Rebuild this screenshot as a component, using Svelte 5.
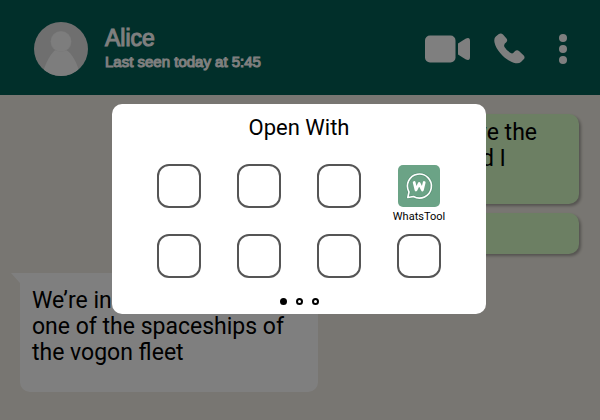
<script>
  const apps = [
    { id: 1 }, { id: 2 }, { id: 3 }, { id: 4, name: 'WhatsTool' },
    { id: 5 }, { id: 6 }, { id: 7 }, { id: 8 }
  ];
  const pages = [1, 2, 3];
  let page = $state(1);
</script>

<div class="screen">
  <header>
    <svg class="avatar" viewBox="0 0 54 54" aria-hidden="true">
      <defs><clipPath id="face"><circle cx="27" cy="27" r="27" /></clipPath></defs>
      <g clip-path="url(#face)">
        <rect width="54" height="54" fill="#dedede" />
        <path d="M8 54C11 41 18 29 22 28L32 28C37 30 44 41 46 54Z" fill="#fafafa" />
        <circle cx="27" cy="19.500" r="10.500" fill="#f0f0f0" />
        <circle cx="27" cy="19.500" r="10" fill="#fafafa" />
      </g>
    </svg>
    <div class="contact">
      <h1>Alice</h1>
      <p>Last seen today at 5:45</p>
    </div>
    <nav>
      <button aria-label="Video call">
        <svg width="46" height="28" viewBox="0 0 46 28">
          <rect x="0" y="0.500" width="30.500" height="27" rx="5" />
          <path d="M33 8.500L40.500 3.800Q45 1.500 45 6V22Q45 26.500 40.500 24.200L33 19.500Z" />
        </svg>
      </button>
      <button aria-label="Call">
        <svg width="31" height="31" viewBox="0 0 31 31">
          <path d="M4.500 1.200Q7 -.5 9 1.500L12.500 5.500Q14 7.500 12.300 9.300Q9.200 11.200 10.500 14Q12.500 17.500 16.300 19.800Q19 21.500 20.600 18.600Q22.800 16.300 25 18L29.500 22.300Q31.500 24.300 29.700 26.200L27 29Q25 30.800 21.500 30.200C13 28.500 2.500 18.500 .5 9.500Q-.3 5 1.800 3.500Z" />
        </svg>
      </button>
      <button aria-label="More options">
        <svg width="8" height="30" viewBox="0 0 8 30">
          <circle cx="4" cy="4" r="4" /><circle cx="4" cy="15" r="4" /><circle cx="4" cy="26" r="4" />
        </svg>
      </button>
    </nav>
  </header>

  <main>
    <p class="bubble sent tall">We all leave the<br />please, and I</p>
    <p class="bubble sent short"></p>
    <p class="bubble received">We’re in<br />one of the spaceships of<br />the vogon fleet</p>
  </main>

  <div class="backdrop">
    <div class="sheet" role="dialog" aria-labelledby="sheet-title">
      <h2 id="sheet-title">Open With</h2>
      <div class="apps">
        {#each apps as app (app.id)}
          {#if app.name}
            <button class="app named">
              <svg width="42" height="42" viewBox="0 0 42 42" aria-hidden="true">
                <rect width="42" height="42" rx="5" fill="#6ba386" />
                <g fill="none" stroke-linecap="round" stroke-linejoin="round">
                  <path d="M11 27A12 12 0 1 1 15.500 31.500L9.800 32.500Z" stroke="#5b9478" stroke-width="3" />
                  <path d="M11 27A12 12 0 1 1 15.500 31.500L9.800 32.500Z" stroke="#fff" stroke-width="1.600" />
                  <path d="M16.200 17.500L18 25L21.200 18.500L24.400 25L26.200 17.500" stroke="#fff" stroke-width="2.800" />
                </g>
              </svg>
              <span>{app.name}</span>
            </button>
          {:else}
            <button class="app" aria-label="App {app.id}"><i class="tile"></i></button>
          {/if}
        {/each}
      </div>
      <div class="dots">
        {#each pages as n}
          <button class:current={page === n} aria-label="Page {n}" onclick={() => (page = n)}></button>
        {/each}
      </div>
    </div>
  </div>
</div>

<style>
  .screen {
    position: relative;
    min-height: 100vh;
    background: #f1ede4;
    color: #000;
    font-family: Roboto, 'Liberation Sans', sans-serif;
  }
  h1, h2, p { margin: 0; font-weight: 400; }
  button { padding: 0; border: 0; background: none; color: inherit; font: inherit; }
  svg { display: block; flex: none; }

  header {
    display: flex;
    align-items: center;
    box-sizing: border-box;
    height: 95px;
    padding: 2px 33px 0 34px;
    background: #025e54;
    color: #fff;
    font-family: 'Liberation Sans', Arial, sans-serif;
  }
  .avatar { width: 54px; height: 54px; }
  .contact { flex: 1; margin-left: 17px; }
  h1 { font-size: 23px; line-height: 26px; -webkit-text-stroke: 1px; }
  header p { font-size: 15px; line-height: 22px; -webkit-text-stroke: 1px; }
  nav { display: flex; align-items: center; gap: 23px; }
  nav button:last-child { margin-left: 11px; }
  nav svg { fill: #fff; }

  main { display: flex; flex-direction: column; padding: 19px 21px 28px 20px; }
  .bubble { box-sizing: border-box; border-radius: 10px; font-size: 23px; line-height: 26px; }
  .sent {
    align-self: flex-end;
    min-width: 180px;
    background: #d9ffc7;
    box-shadow: 2px 2px 3px rgba(0, 0, 0, 0.3);
  }
  .tall { height: 90px; padding: 6px 42px 0 20px; }
  .short { height: 41px; margin-top: 9px; }
  .received {
    position: relative;
    align-self: flex-start;
    min-width: 298px;
    min-height: 119px;
    margin-top: 19px;
    padding: 15px 12px;
    border-top-left-radius: 0;
    background: #fff;
  }
  .received::before {
    content: '';
    position: absolute;
    top: 0;
    left: -9px;
    border-top: 10px solid #fff;
    border-left: 9px solid transparent;
  }

  .backdrop {
    position: absolute;
    inset: 0;
    display: flex;
    align-items: center;
    justify-content: center;
    padding: 0 2px 2px 0;
    background: rgba(0, 0, 0, 0.5);
  }
  .sheet {
    box-sizing: border-box;
    padding: 11px 27px 9px;
    border-radius: 10px;
    background: #fff;
    text-align: center;
  }
  h2 { font-size: 22px; line-height: 26px; }
  .apps {
    display: grid;
    grid-template-columns: repeat(4, 80px);
    grid-auto-rows: 60px;
    row-gap: 10px;
    margin-top: 23px;
  }
  .app { display: flex; flex-direction: column; align-items: center; }
  .named { padding-top: 1px; }
  .named span { font-size: 11px; line-height: 14px; margin-top: 3px; }
  .tile {
    box-sizing: border-box;
    width: 44px;
    height: 44px;
    border: 2px solid #555;
    border-radius: 12px;
  }
  .dots { display: flex; justify-content: center; gap: 9px; padding-top: 4px; }
  .dots button {
    box-sizing: border-box;
    width: 7px;
    height: 7px;
    border: 2px solid #000;
    border-radius: 50%;
  }
  .dots .current { background: #000; }
</style>
